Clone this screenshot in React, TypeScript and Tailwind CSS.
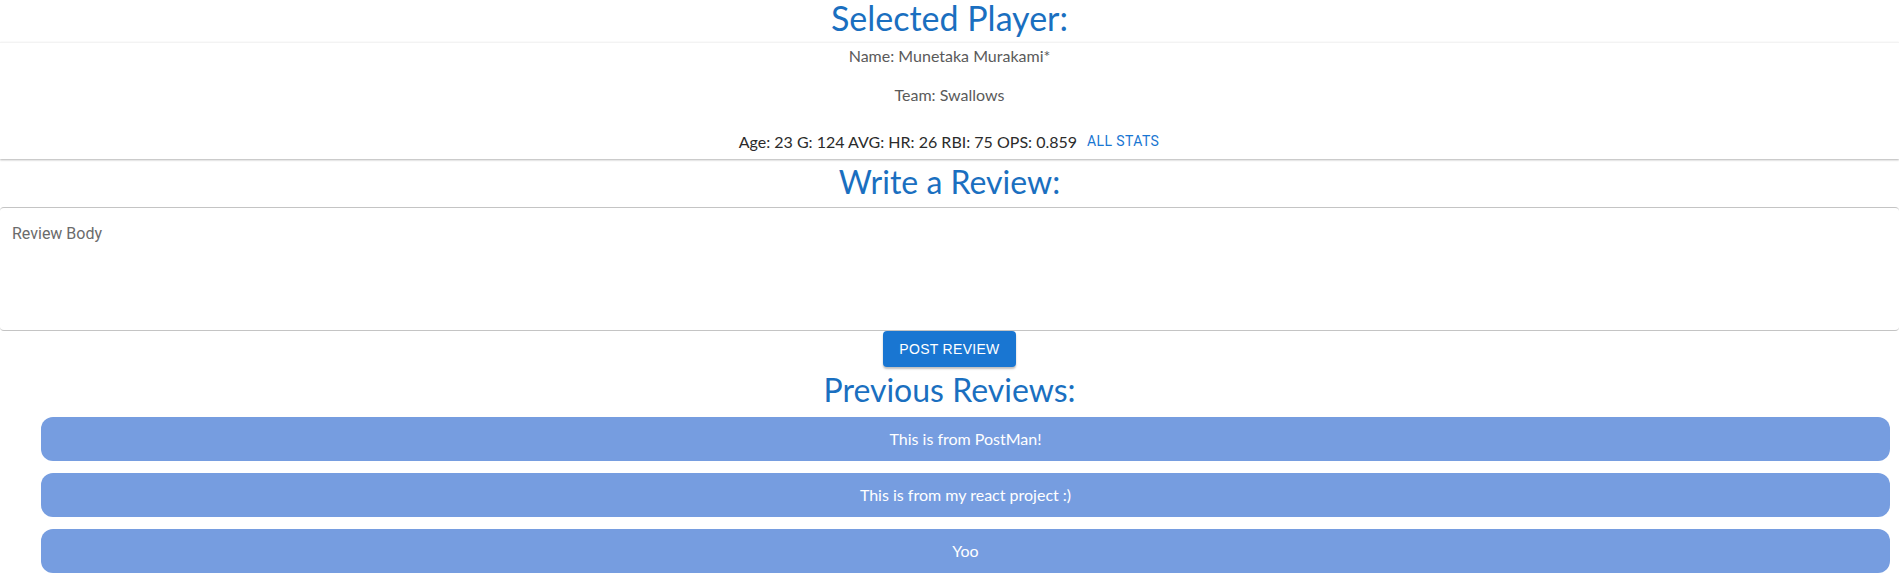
import { useState } from "react";

const reviews = [
  { id: 1, body: "This is from PostMan!" },
  { id: 2, body: "This is from my react project :)" },
  { id: 3, body: "Yoo" },
];

export default function App() {
  const [text, setText] = useState("");

  return (
    <div className="min-h-screen bg-white font-['Lato',sans-serif]">
      {/* Selected player */}
      <h1 className="h-[42px] flex items-center justify-center text-[34px] leading-none text-[#1a6fc0] pb-[6px]">
        Selected Player:
      </h1>
      <div className="border-t border-[#f3f3f3] h-[117px] flex flex-col items-center text-[16px] text-[#5a5a5a] shadow-[0_1px_2px_rgba(0,0,0,0.3)]">
        <p className="mt-[4px] h-[18px] leading-[18px]">Name: Munetaka Murakami*</p>
        <p className="mt-[21px] h-[18px] leading-[18px]">Team: Swallows</p>
        <div className="mt-[27px] flex items-center gap-[9px]">
          <p className="h-[18px] leading-[18px] text-[#2b2b2b]">
            Age: 23 G: 124 AVG: HR: 26 RBI: 75 OPS: 0.859
          </p>
          <button className="font-['Roboto',sans-serif] text-[14px] tracking-[0.4px] uppercase text-[#1976d2] px-[1px]">
            All Stats
          </button>
        </div>
      </div>

      {/* Write a review */}
      <h2 className="mt-[1px] h-[47px] flex items-center justify-center text-[32px] leading-none text-[#1a6fc0] pb-[4px]">
        Write a Review:
      </h2>
      <textarea
        value={text}
        onChange={(e) => setText(e.target.value)}
        placeholder="Review Body"
        className="block w-full h-[124px] resize-none rounded-[4px] border-y border-x-0 border-[#c4c4c4] px-[12px] pt-[14px] font-['Roboto',sans-serif] text-[16px] text-[#222] placeholder:text-[#6b6b6b] outline-none"
      />

      <div className="flex justify-center">
        <button className="w-[133px] h-[36px] rounded-[4px] bg-[#1976d2] text-white font-['Liberation_Sans',sans-serif] text-[14px] tracking-[0.3px] uppercase shadow-[0_2px_2px_rgba(0,0,0,0.25)]">
          Post Review
        </button>
      </div>

      {/* Previous reviews */}
      <h2 className="h-[50px] flex items-center justify-center text-[32px] leading-none text-[#1a6fc0] pb-[4px]">
        Previous Reviews:
      </h2>
      <ul className="pl-[41px] pr-[9px] flex flex-col gap-[12px]">
        {reviews.map((r) => (
          <li
            key={r.id}
            className="h-[44px] rounded-[12px] bg-[#769de0] flex items-center justify-center text-white text-[16px]"
          >
            {r.body}
          </li>
        ))}
      </ul>
    </div>
  );
}
